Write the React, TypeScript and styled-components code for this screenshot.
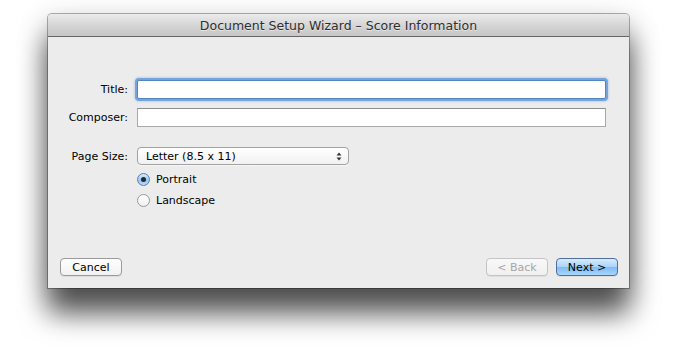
import styled, { createGlobalStyle } from "styled-components";

const GlobalStyle = createGlobalStyle`
   html, body {
      margin: 0;
      padding: 0;
      background: #ffffff;
      font-family: "DejaVu Sans", "Liberation Sans", sans-serif;
   }
`;

export default function App() {
   const fields = ["Title:", "Composer:"];

   return (
      <Page>
         <GlobalStyle />
         <Window>
            <TitleBar>Document Setup Wizard – Score Information</TitleBar>
            <Body>
               <Form>
                  {fields.map((label, i) => (
                     <Row key={label}>
                        <Label>{label}</Label>
                        <TextField $focused={i === 0} />
                     </Row>
                  ))}
                  <Row $top={20}>
                     <Label>Page Size:</Label>
                     <Select>
                        <span>Letter (8.5 x 11)</span>
                        <Arrows>
                           <svg width="6" height="9" viewBox="0 0 6 9">
                              <path d="M0.5 3.5 L3 0.5 L5.5 3.5 Z" fill="#333" />
                              <path d="M0.5 5.5 L3 8.5 L5.5 5.5 Z" fill="#333" />
                           </svg>
                        </Arrows>
                     </Select>
                  </Row>
                  <Radios>
                     <Radio>
                        <RadioDot $checked />
                        Portrait
                     </Radio>
                     <Radio>
                        <RadioDot />
                        Landscape
                     </Radio>
                  </Radios>
               </Form>
               <Buttons>
                  <Button>Cancel</Button>
                  <Spacer />
                  <Button $disabled>&lt; Back</Button>
                  <Button $primary>Next &gt;</Button>
               </Buttons>
            </Body>
         </Window>
      </Page>
   );
}

const Page = styled.div`
   padding: 14px 0 0 48px;
   height: 359px;
   box-sizing: border-box;
`;

const Window = styled.div`
   width: 581px;
   height: 274px;
   display: flex;
   flex-direction: column;
   border-radius: 4px 4px 0 0;
   background: #ececec;
   box-shadow: 0 26px 28px rgba(0, 0, 0, 0.6), 0 10px 30px rgba(0, 0, 0, 0.3),
      0 0 0 1px rgba(0, 0, 0, 0.3);
   overflow: hidden;
`;

const TitleBar = styled.div`
   height: 22px;
   flex-shrink: 0;
   display: flex;
   align-items: center;
   justify-content: center;
   font-size: 12.5px;
   color: #2e2e2e;
   background: linear-gradient(#ebebeb, #d2d2d2 60%, #c6c6c6);
   border-bottom: 1px solid #666;
   text-shadow: 0 1px 0 rgba(255, 255, 255, 0.5);
`;

const Body = styled.div`
   flex: 1;
   display: flex;
   flex-direction: column;
   padding: 43px 23px 12px 11px;
`;

const Form = styled.div`
   display: flex;
   flex-direction: column;
   gap: 9px;
`;

const Row = styled.div<{ $top?: number }>`
   display: grid;
   grid-template-columns: 69px 1fr;
   column-gap: 9px;
   align-items: center;
   margin-top: ${(p) => (p.$top ? p.$top - 9 : 0)}px;
`;

const Label = styled.div`
   text-align: right;
   font-size: 11px;
   color: #000;
`;

const TextField = styled.div<{ $focused?: boolean }>`
   height: 19px;
   box-sizing: border-box;
   background: #fff;
   border: 1px solid ${(p) => (p.$focused ? "#4f86c6" : "#a8a8a8")};
   border-top-color: ${(p) => (p.$focused ? "#4f86c6" : "#8e8e8e")};
   box-shadow: ${(p) =>
      p.$focused ? "0 0 0 2px rgba(105, 155, 215, 0.85), 0 0 2px 3px rgba(120, 170, 225, 0.35)" : "none"};
   border-radius: ${(p) => (p.$focused ? "2px" : "0")};
`;

const Select = styled.div`
   width: 212px;
   height: 18px;
   box-sizing: border-box;
   display: flex;
   align-items: center;
   justify-content: space-between;
   padding: 0 6px 0 8px;
   font-size: 11px;
   color: #000;
   background: linear-gradient(#ffffff, #f1f1f1);
   border: 1px solid #a2a2a2;
   border-radius: 4px;
   box-shadow: 0 1px 0 rgba(255, 255, 255, 0.6);
`;

const Arrows = styled.span`
   display: flex;
   align-items: center;
`;

const Radios = styled.div`
   display: flex;
   flex-direction: column;
   gap: 8px;
   margin: -1px 0 0 78px;
`;

const Radio = styled.div`
   display: flex;
   align-items: center;
   gap: 6px;
   font-size: 11px;
   color: #000;
   height: 13px;
`;

const RadioDot = styled.span<{ $checked?: boolean }>`
   width: 13px;
   height: 13px;
   box-sizing: border-box;
   border-radius: 50%;
   display: flex;
   align-items: center;
   justify-content: center;
   border: 1px solid ${(p) => (p.$checked ? "#5c7fae" : "#9a9a9a")};
   background: ${(p) =>
      p.$checked
         ? "linear-gradient(#dbeafb, #9cc6f0 55%, #b9d9f8)"
         : "linear-gradient(#ffffff, #f0f0f0)"};

   &::after {
      content: "";
      display: ${(p) => (p.$checked ? "block" : "none")};
      width: 5px;
      height: 5px;
      border-radius: 50%;
      background: #1e2a3a;
   }
`;

const Buttons = styled.div`
   margin-top: auto;
   display: flex;
   align-items: center;
   gap: 8px;
   padding-left: 1px;
   margin-right: -12px;
`;

const Spacer = styled.div`
   flex: 1;
`;

const Button = styled.div<{ $primary?: boolean; $disabled?: boolean }>`
   width: 62px;
   height: 18px;
   box-sizing: border-box;
   display: flex;
   align-items: center;
   justify-content: center;
   font-size: 11px;
   border-radius: 4px;
   color: ${(p) => (p.$disabled ? "#a6a6a6" : "#000")};
   border: 1px solid
      ${(p) => (p.$primary ? "#4f6f9f" : p.$disabled ? "#c4c4c4" : "#9a9a9a")};
   background: ${(p) =>
      p.$primary
         ? "linear-gradient(#d8ebfc, #a9d2f8 50%, #7ebaf3 51%, #a8d6fb)"
         : p.$disabled
         ? "linear-gradient(#f8f8f8, #f0f0f0)"
         : "linear-gradient(#ffffff, #f1f1f1)"};
   box-shadow: 0 1px 0 rgba(0, 0, 0, 0.06);
`;
